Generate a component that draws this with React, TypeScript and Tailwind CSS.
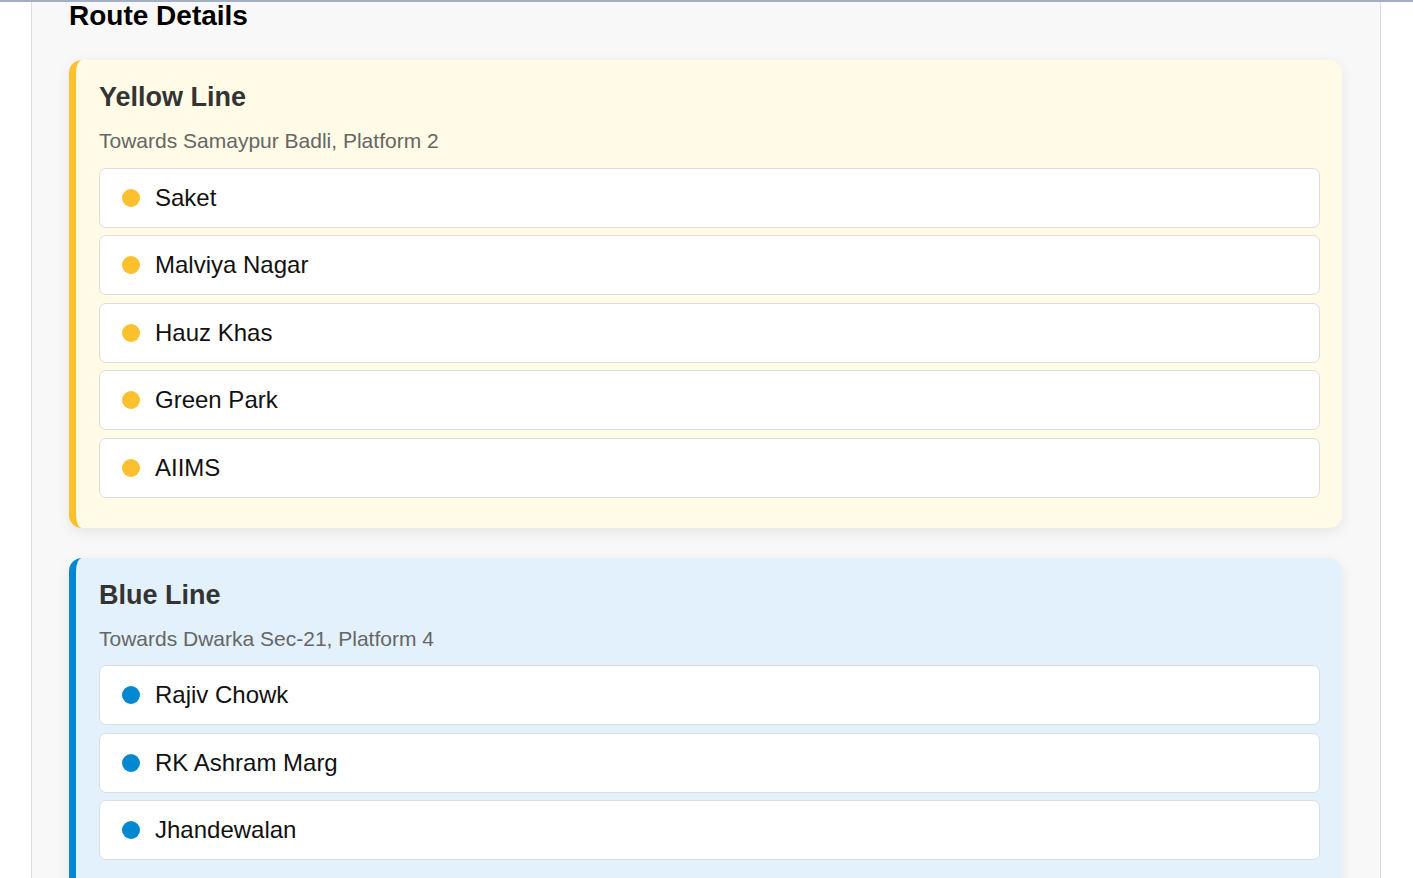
const routes = [
  {
    name: 'Yellow Line',
    towards: 'Towards Samaypur Badli, Platform 2',
    card: 'bg-[#fffbe7] border-[#fbc02d]',
    dot: 'bg-[#fbc02d]',
    stations: ['Saket', 'Malviya Nagar', 'Hauz Khas', 'Green Park', 'AIIMS'],
  },
  {
    name: 'Blue Line',
    towards: 'Towards Dwarka Sec-21, Platform 4',
    card: 'bg-[#e3f1fc] border-[#0288d1]',
    dot: 'bg-[#0288d1]',
    stations: ['Rajiv Chowk', 'RK Ashram Marg', 'Jhandewalan'],
  },
]

export default function App() {
  return (
    <div className="h-[878px] overflow-hidden bg-white font-['Liberation_Sans',Arial,sans-serif]">
      <div className="h-[2px] bg-[#a3afc6]" />
      <div className="ml-[31px] w-[1350px] h-[876px] overflow-hidden bg-[#f8f8f8] border-x border-[#dcdcdc] px-[37px]">
        <h2 className="mt-[-2px] mb-[28px] text-[28px] leading-[32px] font-bold text-black">Route Details</h2>
        <div className="flex flex-col gap-[30px] w-[1273px]">
          {routes.map((route) => (
            <div
              key={route.name}
              className={`rounded-[13px] border-l-[7px] pl-[23px] pr-[22px] pt-[22px] pb-[30px] shadow-[0_4px_14px_rgba(0,0,0,0.08)] ${route.card}`}
            >
              <h3 className="text-[27px] leading-[31px] font-bold text-[#333]">{route.name}</h3>
              <p className="mt-[16px] mb-[14.5px] text-[21px] leading-[24px] text-[#666]">{route.towards}</p>
              <div className="flex flex-col gap-[7.5px]">
                {route.stations.map((s) => (
                  <div
                    key={s}
                    className="h-[60px] flex items-center gap-[15px] pl-[22px] bg-white border border-[#dddddd] rounded-[7px]"
                  >
                    <span className={`w-[18px] h-[18px] rounded-full ${route.dot}`} />
                    <span className="text-[24px] text-[#111]">{s}</span>
                  </div>
                ))}
              </div>
            </div>
          ))}
        </div>
      </div>
    </div>
  )
}
